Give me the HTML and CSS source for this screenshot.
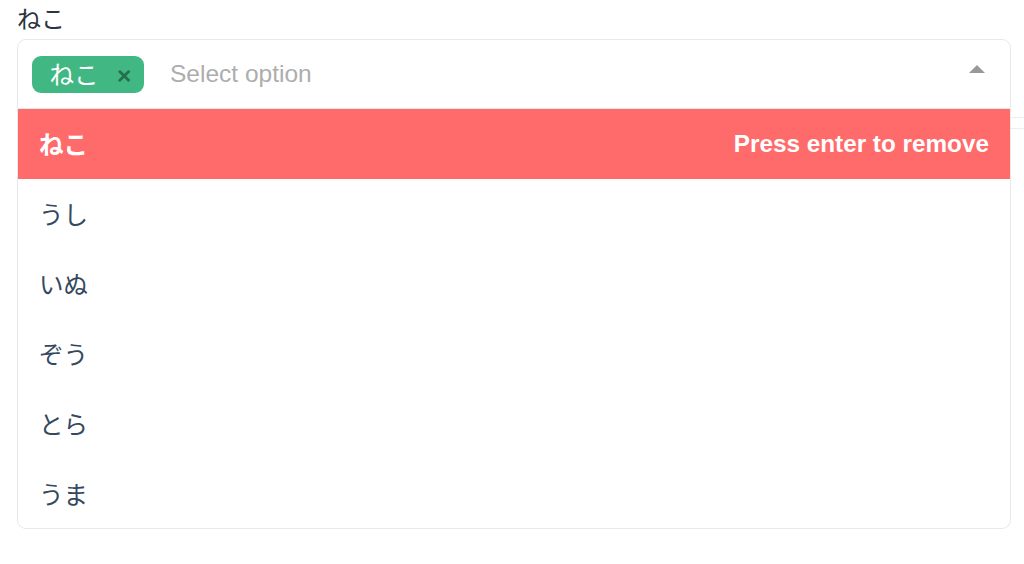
FILE: index.html
```html
<!DOCTYPE html>
<html lang="ja">
<head>
<meta charset="utf-8">
<title>Multiselect</title>
<link rel="stylesheet" href="styles.css">
</head>
<body>
<div class="page">
  <label class="label">ねこ</label>
  <div class="ms">
    <div class="ms__tags">
      <span class="ms__tag"><span class="ms__tag-text">ねこ</span><i class="ms__tag-icon">×</i></span>
      <span class="ms__placeholder">Select option</span>
    </div>
    <span class="ms__arrow"></span>
    <div class="ms__content">
      <ul class="ms__list">
        <li class="opt opt--selected"><span>ねこ</span><span class="opt__hint">Press enter to remove</span></li>
        <li class="opt"><span>うし</span></li>
        <li class="opt"><span>いぬ</span></li>
        <li class="opt"><span>ぞう</span></li>
        <li class="opt"><span>とら</span></li>
        <li class="opt"><span>うま</span></li>
      </ul>
    </div>
  </div>
  <div class="below"></div>
</div>
</body>
</html>
```

FILE: styles.css
```css
* { box-sizing: border-box; }

html, body {
  margin: 0;
  padding: 0;
  background: #fff;
}

body {
  font-family: "Liberation Sans", "Noto Sans CJK JP", sans-serif;
  color: #2c3e50;
}

.page {
  padding: 3px 13px 0 17px;
  min-height: 564px;
}

.label {
  display: block;
  font-family: "Noto Sans CJK JP", sans-serif;
  font-size: 24px;
  line-height: 30px;
  height: 36px;
  color: #2b3440;
}

.ms {
  position: relative;
  color: #35495e;
  z-index: 1;
}

.ms__tags {
  height: 70px;
  display: flex;
  align-items: center;
  padding: 0 70px 0 14px;
  border: 1px solid #e8e8e8;
  border-radius: 9px 9px 0 0;
  background: #fff;
}

.ms__tag {
  position: relative;
  display: inline-flex;
  align-items: center;
  height: 37px;
  padding: 0 45px 0 17.5px;
  margin-right: 17.5px;
  border-radius: 9px;
  background: #41b883;
  color: #fff;
  font-family: "Noto Sans CJK JP", sans-serif;
  font-size: 24.5px;
  line-height: 1;
  margin-top: 1px;
}

.ms__tag-icon {
  position: absolute;
  right: 0;
  top: 0;
  bottom: 0;
  width: 38.5px;
  display: flex;
  align-items: center;
  justify-content: center;
  font-style: normal;
  font-family: "Liberation Sans", sans-serif;
  font-weight: 700;
  font-size: 24.5px;
  color: #266d4d;
  padding-top: 3px;
}

.ms__placeholder {
  padding-left: 9px;
  color: #adadad;
  font-size: 24.5px;
  line-height: 1;
  margin-top: 1px;
}

.ms__arrow {
  position: absolute;
  top: 26px;
  right: 26px;
  width: 0;
  height: 0;
  border-style: solid;
  border-width: 0 8.5px 8.5px 8.5px;
  border-color: transparent transparent #999 transparent;
}

.ms__content {
  position: absolute;
  top: 100%;
  left: 0;
  right: 0;
  height: 420px;
  background: #fff;
  border: 1px solid #e8e8e8;
  border-top: 0;
  border-radius: 0 0 9px 9px;
  z-index: 2;
  overflow: hidden;
}

.ms__list {
  list-style: none;
  margin: 0;
  padding: 0;
}

.opt {
  height: 70px;
  display: flex;
  align-items: center;
  justify-content: space-between;
  padding: 0 21px 0 21px;
  font-family: "Noto Sans CJK JP", sans-serif;
  font-size: 24.5px;
  line-height: 28px;
  color: #35495e;
  white-space: nowrap;
}

.opt--selected {
  background: #ff6a6a;
  color: #fff;
  font-weight: 700;
}

.opt__hint {
  font-family: "Liberation Sans", sans-serif;
  font-size: 24.3px;
  font-weight: 700;
  color: #fff;
}

.below {
  position: relative;
  z-index: 0;
  height: 12px;
  margin: 8px -13px 0 0;
  border-top: 1px solid #eeeeee;
  border-bottom: 1px solid #eeeeee;
}
```
